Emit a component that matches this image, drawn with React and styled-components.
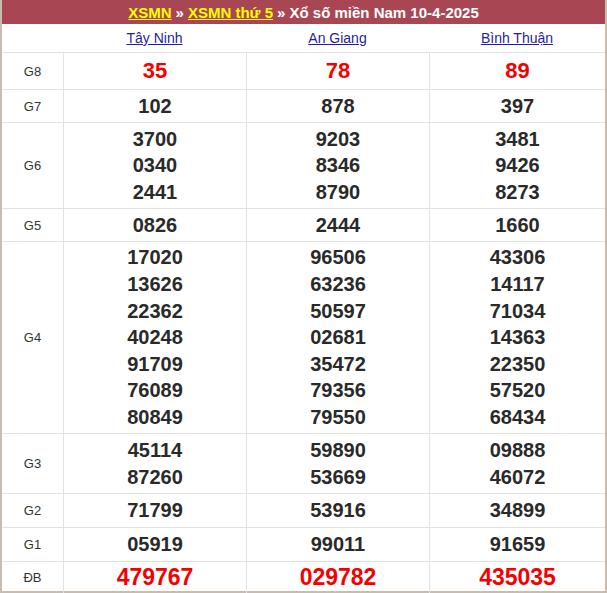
import React from 'react';
import styled, { createGlobalStyle } from 'styled-components';

const G = createGlobalStyle`
  body { margin:0; background:#fff; font-family:"Liberation Sans", Arial, sans-serif; }
`;
const Wrap = styled.div`
  width:607px; height:593px; box-sizing:border-box;
  border:2px solid #c9bcaf; border-top:none;
`;
const Title = styled.div`
  height:24px; background:#a94653; color:#fff; font-weight:bold; font-size:15px;
  display:flex; align-items:center; justify-content:center; gap:4px;
  a { color:#ffff00; text-decoration:underline; }
`;
const Table = styled.div`
  display:grid; grid-template-columns:61px 183px 183px 176px;
`;
const Cell = styled.div`
  border-left:${p => p.$first ? 'none' : '1px solid #e2e2e2'};
  border-top:${p => p.$noTop ? 'none' : '1px solid #e2e2e2'};
  display:flex; flex-direction:column; align-items:center; justify-content:center;
  height:${p => p.$h}px; box-sizing:border-box;
`;
const Head = styled.a`
  color:#1f1f9c; text-decoration:underline; font-size:14px;
`;
const Label = styled.span`font-size:13px; color:#333;`;
const Num = styled.span`
  font-weight:bold; font-size:${p => p.$big ? 23 : p.$red ? 22 : 20}px;
  color:${p => p.$red ? '#f40000' : '#2a2a2a'}; line-height:26.6px;
`;

const rows = [
  ['G8', 37, [['35'], ['78'], ['89']], 'red'],
  ['G7', 33, [['102'], ['878'], ['397']]],
  ['G6', 86, [['3700','0340','2441'], ['9203','8346','8790'], ['3481','9426','8273']]],
  ['G5', 33, [['0826'], ['2444'], ['1660']]],
  ['G4', 192, [['17020','13626','22362','40248','91709','76089','80849'], ['96506','63236','50597','02681','35472','79356','79550'], ['43306','14117','71034','14363','22350','57520','68434']]],
  ['G3', 60, [['45114','87260'], ['59890','53669'], ['09888','46072']]],
  ['G2', 34, [['71799'], ['53916'], ['34899']]],
  ['G1', 34, [['05919'], ['99011'], ['91659']]],
  ['ĐB', 32, [['479767'], ['029782'], ['435035']], 'big'],
];

export default function App() {
  return (
    <Wrap>
      <G />
      <Title><a>XSMN</a> » <a>XSMN thứ 5</a> » Xổ số miền Nam 10-4-2025</Title>
      <Table>
        <Cell $first $noTop $h={28} />
        {['Tây Ninh', 'An Giang', 'Bình Thuận'].map(n => (
          <Cell key={n} $first $noTop $h={28}><Head>{n}</Head></Cell>
        ))}
        {rows.map(([l, h, cols, k]) => (
          <React.Fragment key={l}>
            <Cell $first $h={h}><Label>{l}</Label></Cell>
            {cols.map((c, i) => (
              <Cell key={i} $h={h}>
                {c.map(n => <Num key={n} $red={!!k} $big={k === 'big'}>{n}</Num>)}
              </Cell>
            ))}
          </React.Fragment>
        ))}
      </Table>
    </Wrap>
  );
}
